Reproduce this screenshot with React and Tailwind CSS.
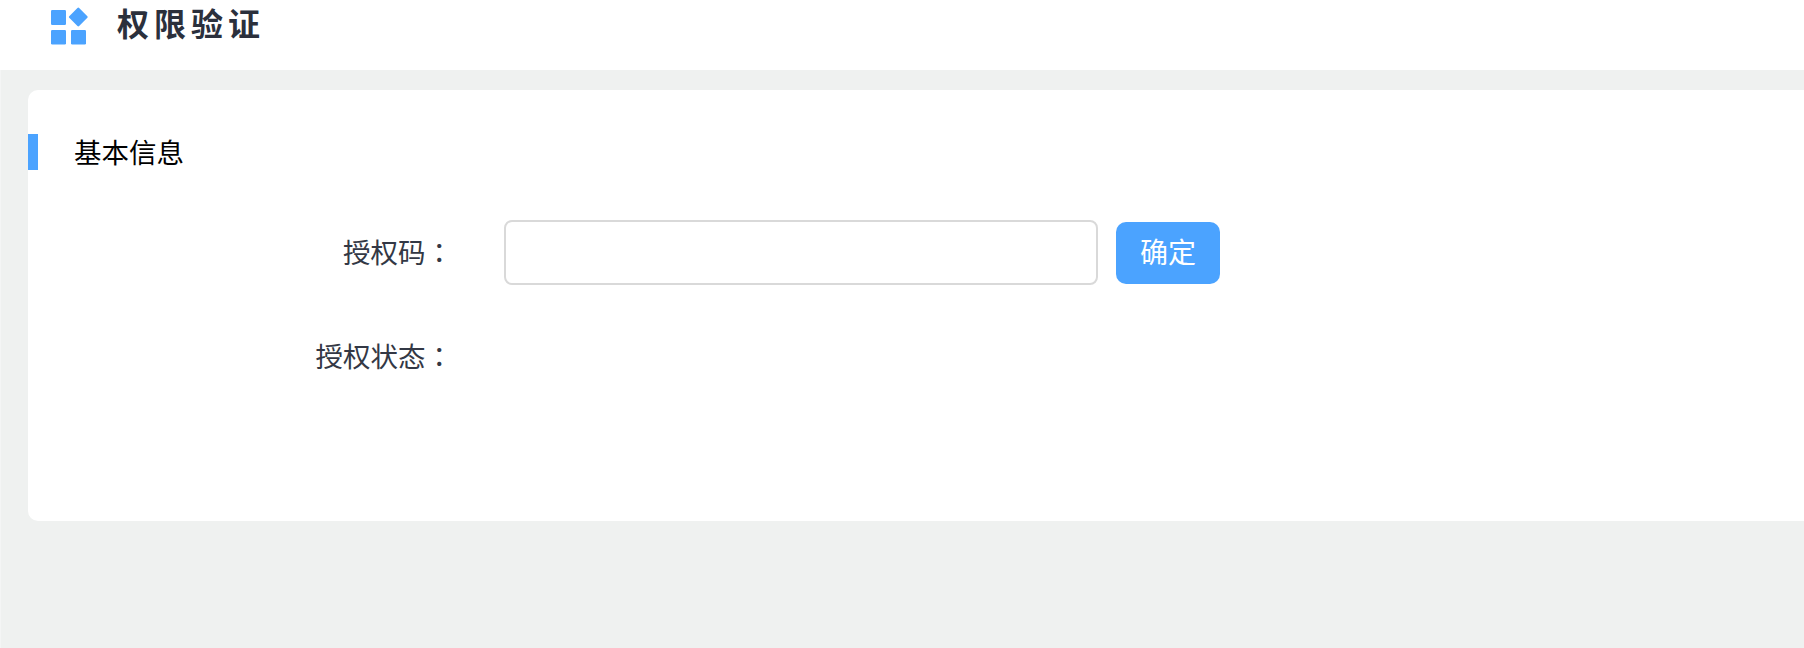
import React, { useState } from "react";

const cjk = "font-['Inter','Noto_Sans_CJK_SC',sans-serif]";

function Logo() {
  return (
    <svg width="38" height="38" viewBox="0 0 38 38" className="shrink-0">
      <rect x="0" y="3" width="15" height="15" rx="1.2" fill="#4ba3ff" />
      <rect x="0" y="23" width="15" height="14.5" rx="1.2" fill="#4ba3ff" />
      <rect x="20" y="23" width="15" height="14.5" rx="1.2" fill="#4ba3ff" />
      <rect x="20.3" y="3" width="14" height="14" rx="1.2" fill="#4ba3ff" transform="rotate(45 27.3 10)" />
    </svg>
  );
}

function Colon() {
  return <span className="font-['Noto_Sans_CJK_TC',sans-serif]">：</span>;
}

export default function App() {
  const [code, setCode] = useState("");

  return (
    <div className={`w-full h-[648px] overflow-hidden flex flex-col bg-white ${cjk}`}>
      <header className="h-[70px] shrink-0 bg-white flex items-start pt-[7px] pl-[51px]">
        <Logo />
        <h1 className="ml-[28px] text-[32px] leading-[36px] font-bold tracking-[5px] text-[#2b303c]">权限验证</h1>
      </header>

      <div className="flex-1 bg-[#eff1f0] border-l border-[#f4f5f5] pt-[20px] pl-[27px]">
        <div className="h-[431px] bg-white rounded-l-[10px] pt-[44px]">
          <div className="h-[36px] border-l-[10px] border-[#4ba3ff] pl-[36px] text-[27.5px] leading-[38px] text-black">基本信息</div>

          <div className="mt-[50px] flex items-center">
            <label className="w-[425px] pb-[2px] text-right text-[27.5px] leading-[34px] text-[#333845]">授权码<Colon /></label>
            <input
              value={code}
              onChange={(e) => setCode(e.target.value)}
              className="ml-[51px] w-[594px] h-[65px] border-2 border-[#d9d9d9] rounded-[8px] outline-none"
            />
            <button className="ml-[18px] w-[104px] h-[62px] bg-[#4ba3ff] text-white text-[28px] leading-[56px] rounded-[10px]">确定</button>
          </div>

          <div className="mt-[52px] flex items-center">
            <label className="w-[425px] text-right text-[27.5px] leading-[36px] text-[#333845]">授权状态<Colon /></label>
          </div>
        </div>
      </div>
    </div>
  );
}
